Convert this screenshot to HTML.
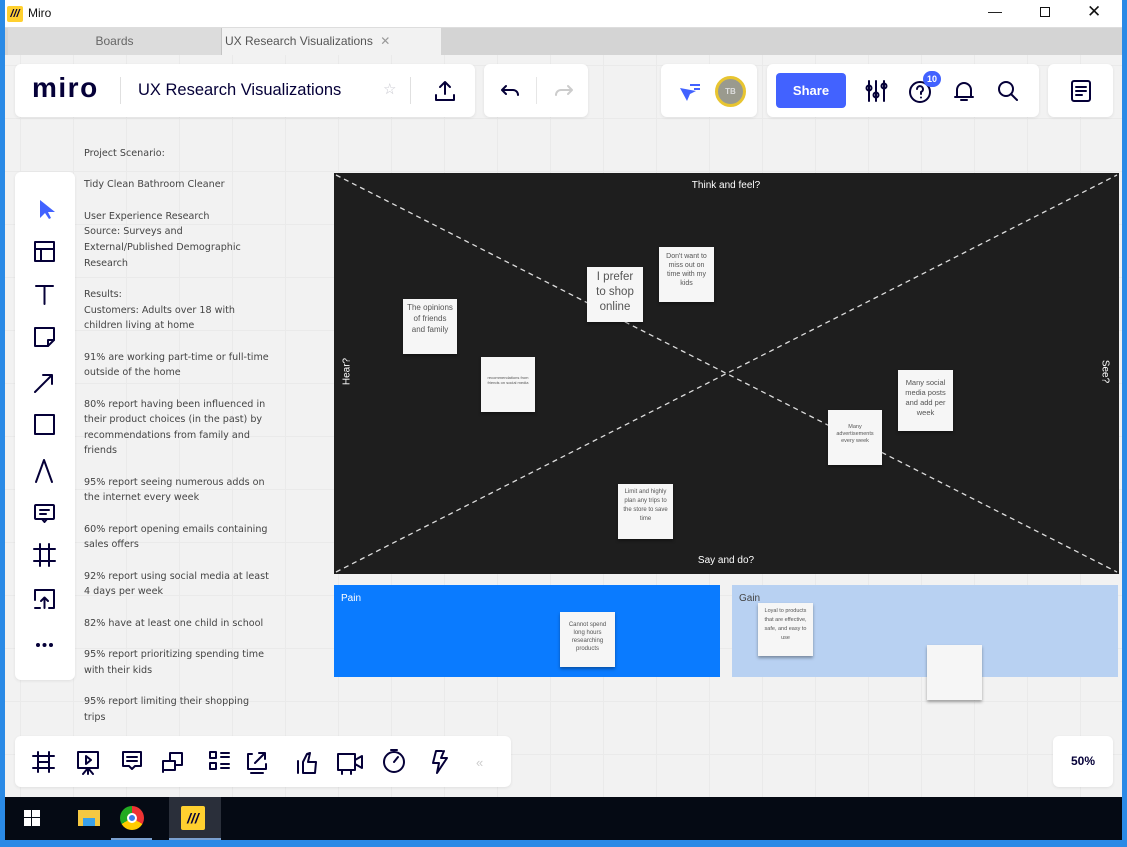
<!DOCTYPE html>
<html><head><meta charset="utf-8"><style>
*{margin:0;padding:0;box-sizing:border-box}
body{width:1127px;height:847px;position:relative;overflow:hidden;font-family:"Liberation Sans",sans-serif;background:#f2f2f2}
.a{position:absolute}
.grid{left:0;top:55px;width:1127px;height:742px;background-image:linear-gradient(#eaeaea 1px,transparent 1px),linear-gradient(90deg,#eaeaea 1px,transparent 1px);background-size:53px 53px;background-position:20px 10px}
.panel{background:#fff;border-radius:6px;box-shadow:0 1px 3px rgba(0,0,0,.08)}
.txt{left:84px;top:146px;font-size:10.6px;line-height:15.65px;color:#444;width:220px;letter-spacing:0.35px;font-family:"DejaVu Sans",sans-serif;font-size:9.6px;letter-spacing:0}
.note{background:#f6f6f6;color:#555;text-align:center;font-size:7px;line-height:9px;padding-top:4px;box-shadow:0 2px 3px rgba(0,0,0,.35)}
.ic{stroke:#050038;stroke-width:2;fill:none;stroke-linecap:round;stroke-linejoin:round}
</style></head><body>
<div class="a grid"></div>
<div class="a" style="left:0;top:0;width:1127px;height:28px;background:#fff;border-bottom:1px solid #ddd"></div>
<div class="a" style="left:7px;top:6px;width:16px;height:16px;background:#ffd02f;border-radius:2px;font-size:11px;font-weight:bold;line-height:16px;text-align:center;color:#050038;font-style:italic">///</div>
<div class="a" style="left:28px;top:6px;font-size:12px;color:#111">Miro</div>
<div class="a" style="left:988px;top:3px;font-size:14px;color:#111">—</div>
<div class="a" style="left:1040px;top:7px;width:10px;height:10px;border:1px solid #111"></div>
<div class="a" style="left:1087px;top:2px;font-size:17px;color:#111">✕</div>
<div class="a" style="left:0;top:28px;width:1127px;height:27px;background:#d4d4d4"></div>
<div class="a" style="left:8px;top:28px;width:214px;height:27px;background:#dcdcdc;border-right:1px solid #c4c4c4;text-align:center;font-size:12px;line-height:27px;color:#666">Boards</div>
<div class="a" style="left:222px;top:28px;width:219px;height:27px;background:#f2f2f2;font-size:12px;line-height:27px;color:#555;padding-left:3px">UX Research Visualizations <span style="color:#999;margin-left:4px">✕</span></div>
<div class="a" style="left:0;top:0;width:5px;height:847px;background:#2a8ae6"></div>
<div class="a" style="left:1122px;top:0;width:5px;height:847px;background:#2a8ae6"></div>
<div class="a panel" style="left:15px;top:64px;width:460px;height:53px"></div>
<div class="a" style="left:32px;top:72px;font-size:28px;font-weight:bold;color:#050038;letter-spacing:1.5px">miro</div>
<div class="a" style="left:120px;top:77px;width:1px;height:27px;background:#e0e0e0"></div>
<div class="a" style="left:138px;top:81px;font-size:16.5px;color:#050038">UX Research Visualizations</div>
<div class="a" style="left:383px;top:80px;font-size:15px;color:#c8c8d0">☆</div>
<div class="a" style="left:410px;top:77px;width:1px;height:27px;background:#e0e0e0"></div>
<svg class="a" style="left:433px;top:79px" width="24" height="24" viewBox="0 0 24 24"><path class="ic" d="M12 15V3M7 8l5-5 5 5M3 16v5h18v-5"/></svg>
<div class="a panel" style="left:484px;top:64px;width:104px;height:53px"></div>
<svg class="a" style="left:498px;top:82px" width="24" height="20" viewBox="0 0 24 20"><path class="ic" d="M4 8h11a5 5 0 0 1 5 5M4 8l4-4M4 8l4 4" stroke-width="2.5"/></svg>
<div class="a" style="left:536px;top:77px;width:1px;height:27px;background:#e6e6e6"></div>
<svg class="a" style="left:552px;top:82px" width="24" height="20" viewBox="0 0 24 20"><path class="ic" d="M20 8H9a5 5 0 0 0-5 5M20 8l-4-4M20 8l-4 4" style="stroke:#ccc"/></svg>
<div class="a panel" style="left:661px;top:64px;width:96px;height:53px"></div>
<svg class="a" style="left:678px;top:80px" width="26" height="22" viewBox="0 0 26 22"><path d="M2 8l16 3-6 3-3 7z" fill="#4262ff"/><path d="M12 5h10M16 9h6" stroke="#4262ff" stroke-width="2"/></svg>
<div class="a" style="left:715px;top:76px;width:31px;height:31px;border-radius:50%;background:#9a9a8e;border:3px solid #e8c530;color:#ddd;font-size:8px;font-weight:bold;text-align:center;line-height:25px">TB</div>
<div class="a panel" style="left:767px;top:64px;width:272px;height:53px"></div>
<div class="a" style="left:776px;top:73px;width:70px;height:35px;background:#4262ff;border-radius:4px;color:#fff;font-weight:bold;font-size:13px;text-align:center;line-height:35px">Share</div>
<svg class="a" style="left:864px;top:78px" width="26" height="26" viewBox="0 0 26 26"><path class="ic" d="M5 3v20M12 3v20M20 3v20" /><circle cx="5" cy="10" r="2.5" fill="#fff" class="ic"/><circle cx="12" cy="17" r="2.5" fill="#fff" class="ic"/><circle cx="20" cy="8" r="2.5" fill="#fff" class="ic"/></svg>
<svg class="a" style="left:908px;top:79px" width="26" height="26" viewBox="0 0 26 26"><circle cx="12" cy="13" r="10" class="ic"/><path class="ic" d="M9 10a3 3 0 1 1 4 3v2"/><circle cx="13" cy="18.5" r="1" fill="#050038"/></svg>
<div class="a" style="left:923px;top:71px;width:18px;height:16px;border-radius:8px;background:#4262ff;color:#fff;font-size:9px;font-weight:bold;text-align:center;line-height:16px">10</div>
<svg class="a" style="left:952px;top:79px" width="24" height="24" viewBox="0 0 24 24"><path class="ic" d="M5 18V11a7 7 0 0 1 14 0v7H3h18M9 21h6"/></svg>
<svg class="a" style="left:996px;top:79px" width="24" height="24" viewBox="0 0 24 24"><circle cx="10" cy="10" r="7" class="ic"/><path class="ic" d="M15 15l6 6"/></svg>
<div class="a panel" style="left:1048px;top:64px;width:65px;height:53px"></div>
<svg class="a" style="left:1069px;top:78px" width="24" height="26" viewBox="0 0 24 26"><rect x="3" y="3" width="18" height="20" rx="2" class="ic"/><path class="ic" d="M7 9h10M7 13h10M7 17h6"/></svg>
<div class="a panel" style="left:15px;top:172px;width:60px;height:508px"></div>
<svg class="a" style="left:30px;top:192px" width="30" height="470" viewBox="0 0 30 470">
<path d="M10 8l0 18 5-5 4 6 2-1-3-6 7 0z" fill="#4262ff"/>
<g class="ic" stroke-width="2.2">
<rect x="5" y="50" width="19" height="19"/><path d="M5 57h19M11 57v12"/>
<path d="M6 94h17M14.5 94v18"/>
<path d="M5 136h19v12l-6 6H5z"/><path d="M18 154v-6h6"/>
<path d="M5 200l17-17M13 183h9v9"/>
<rect x="5" y="223" width="19" height="19"/>
<path d="M6 290l8-22 8 22"/>
<rect x="5" y="313" width="19" height="14" rx="1"/><path d="M10 318h9M10 322h6M12 327l2.5 3 2.5-3"/>
<path d="M10 352v22M19 352v22M4 357h21M4 369h21"/>
<path d="M5 408v-10h19v18h-5M10 416H5M14.5 416v-10M11 409l3.5-3.5 3.5 3.5"/>
</g>
<circle cx="8" cy="453" r="2" fill="#050038"/><circle cx="14.5" cy="453" r="2" fill="#050038"/><circle cx="21" cy="453" r="2" fill="#050038"/>
</svg>
<div class="a txt">Project Scenario:<br><br>Tidy Clean Bathroom Cleaner<br><br>User Experience Research<br>Source: Surveys and<br>External/Published Demographic<br>Research<br><br>Results:<br>Customers: Adults over 18 with<br>children living at home<br><br>91% are working part-time or full-time<br>outside of the home<br><br>80% report having been influenced in<br>their product choices (in the past) by<br>recommendations from family and<br>friends<br><br>95% report seeing numerous adds on<br>the internet every week<br><br>60% report opening emails containing<br>sales offers<br><br>92% report using social media at least<br>4 days per week<br><br>82% have at least one child in school<br><br>95% report prioritizing spending time<br>with their kids<br><br>95% report limiting their shopping<br>trips</div>
<div class="a" style="left:334px;top:173px;width:785px;height:401px;background:#1e1e1e"></div>
<svg class="a" style="left:334px;top:173px" width="785" height="401"><path d="M2 2L783 399M2 399L783 2" stroke="#ddd" stroke-width="1.3" stroke-dasharray="5 4"/></svg>
<div class="a" style="left:676px;top:180px;width:100px;text-align:center;color:#fff;font-size:10px">Think and feel?</div>
<div class="a" style="left:676px;top:555px;width:100px;text-align:center;color:#fff;font-size:10px">Say and do?</div>
<div class="a" style="left:327px;top:366px;width:40px;text-align:center;color:#fff;font-size:10px;transform:rotate(-90deg)">Hear?</div>
<div class="a" style="left:1085px;top:366px;width:40px;text-align:center;color:#fff;font-size:10px;transform:rotate(90deg)">See?</div>
<div class="a note" style="left:403px;top:299px;width:54px;height:55px;font-size:8px;line-height:11px;padding:3px 4px 0">The opinions of friends and family</div>
<div class="a note" style="left:481px;top:357px;width:54px;height:55px;font-size:4px;line-height:5px;padding-top:18px">recommendations from friends on social media</div>
<div class="a note" style="left:587px;top:267px;width:56px;height:55px;font-size:11.5px;line-height:15px;padding:3px 6px 0">I prefer to shop online</div>
<div class="a note" style="left:659px;top:247px;width:55px;height:55px;padding:5px 4px 0">Don't want to miss out on time with my kids</div>
<div class="a note" style="left:618px;top:484px;width:55px;height:55px;font-size:6px;line-height:9px;padding:4px 5px 0">Limit and highly plan any trips to the store to save time</div>
<div class="a note" style="left:828px;top:410px;width:54px;height:55px;font-size:5.5px;line-height:7px;padding:14px 4px 0">Many advertisements every week</div>
<div class="a note" style="left:898px;top:370px;width:55px;height:61px;font-size:7.5px;line-height:10px;padding:8px 4px 0">Many social media posts and add per week</div>
<div class="a" style="left:334px;top:585px;width:386px;height:92px;background:#0a7bff"></div>
<div class="a" style="left:341px;top:593px;color:#fff;font-size:10px">Pain</div>
<div class="a" style="left:732px;top:585px;width:386px;height:92px;background:#b8d1f2"></div>
<div class="a" style="left:739px;top:593px;color:#444;font-size:10px">Gain</div>
<div class="a note" style="left:560px;top:612px;width:55px;height:55px;font-size:6px;line-height:8px;padding:9px 5px 0">Cannot spend long hours researching products</div>
<div class="a note" style="left:758px;top:603px;width:55px;height:53px;font-size:5.5px;line-height:9px;padding:4px 6px 0">Loyal to products that are effective, safe, and easy to use</div>
<div class="a note" style="left:927px;top:645px;width:55px;height:55px"></div>
<div class="a panel" style="left:15px;top:736px;width:496px;height:51px"></div>
<svg class="a" style="left:30px;top:746px" width="470" height="32" viewBox="0 0 470 32">
<g class="ic" stroke-width="2.2">
<path d="M8 6v20M19 6v20M3 10h21M3 22h21M8 16h11"/>
<path d="M48 6h20v16H48zM58 22v6M53 28l5-6 5 6M56 10l5 4-5 4z"/>
<path d="M93 6h18v14h-6l-3 3-3-3h-6zM97 11h10M97 15h10"/>
<path d="M133 15v11M133 15h12v9h-12M140 15V7h12v12h-7"/>
<path d="M180 6h6v6h-6zM180 17h6v6h-6zM191 7h8M191 11h8M191 18h8M191 22h8"/>
<path d="M222 8h-4v15h18v-5M225 17l10-10M229 7h6v6M221 27h12"/>
<path d="M268 27V15M273 27h12l1-11h-8l2-9-3 1-4 8v11"/>
<path d="M308 8h17v16h-17zM325 14l7-4v12l-7-4M312 24v4M321 24v4"/>
<circle cx="364" cy="16" r="10"/><path d="M364 16l4-5M361 4h6"/>
<path d="M412 5h-6l-3 12h6l-2 10 10-15h-6l3-7"/>
</g>
<text x="446" y="21" font-size="13" fill="#ccc" font-family="Liberation Sans">«</text>
</svg>
<div class="a panel" style="left:1053px;top:736px;width:60px;height:51px;font-size:12px;font-weight:bold;color:#050038;text-align:center;line-height:51px">50%</div>
<div class="a" style="left:5px;top:797px;width:1117px;height:43px;background:#050a14"></div>
<div class="a" style="left:0;top:840px;width:1127px;height:7px;background:#2a8ae6"></div>
<svg class="a" style="left:24px;top:810px" width="16" height="16"><rect x="0" y="0" width="7" height="7" fill="#fff"/><rect x="8" y="0" width="8" height="7" fill="#fff"/><rect x="0" y="8" width="7" height="8" fill="#fff"/><rect x="8" y="8" width="8" height="8" fill="#fff"/></svg>
<svg class="a" style="left:78px;top:808px" width="22" height="20"><rect x="0" y="2" width="22" height="16" fill="#f5c842"/><rect x="5" y="10" width="12" height="8" fill="#3aa0e8"/></svg>
<div class="a" style="left:111px;top:797px;width:41px;height:43px;border-bottom:2px solid #7aa0d0"></div>
<div class="a" style="left:120px;top:806px;width:24px;height:24px;border-radius:50%;background:conic-gradient(#e33 0 120deg,#fc0 120deg 240deg,#2a2 240deg)"></div>
<div class="a" style="left:127px;top:813px;width:10px;height:10px;border-radius:50%;background:#3a7ee8;border:2px solid #fff"></div>
<div class="a" style="left:169px;top:797px;width:52px;height:43px;background:#2a2f3a;border-bottom:2px solid #7aa0d0"></div>
<div class="a" style="left:181px;top:806px;width:24px;height:24px;background:#ffd02f;border-radius:2px;font-size:14px;font-weight:bold;font-style:italic;text-align:center;line-height:24px;color:#050038">///</div>
</body></html>
